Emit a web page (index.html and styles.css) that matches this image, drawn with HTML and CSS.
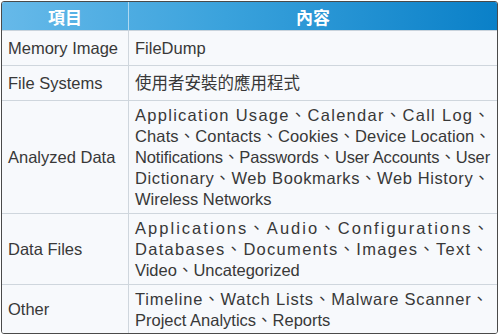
FILE: index.html
```html
<!DOCTYPE html>
<html lang="zh-Hant">
<head>
<meta charset="utf-8">
<title>項目 內容</title>
<link rel="stylesheet" href="styles.css">
</head>
<body>
<div class="frame">
  <table class="spec">
    <thead>
      <tr>
        <th class="col-key">項目</th>
        <th class="col-val">內容</th>
      </tr>
    </thead>
    <tbody>
      <tr class="single">
        <td class="key">Memory Image</td>
        <td class="val">FileDump</td>
      </tr>
      <tr class="single">
        <td class="key">File Systems</td>
        <td class="val">使用者安裝的應用程式</td>
      </tr>
      <tr>
        <td class="key">Analyzed Data</td>
        <td class="val">
          <span class="line ls-usage">Application Usage、Calendar、Call Log、</span>
          <span class="line ls-chats">Chats、Contacts、Cookies、Device Location、</span>
          <span class="line ls-notif">Notifications、Passwords、User Accounts、User</span>
          <span class="line ls-dict">Dictionary、Web Bookmarks、Web History、</span>
          <span class="line">Wireless Networks</span>
        </td>
      </tr>
      <tr>
        <td class="key">Data Files</td>
        <td class="val">
          <span class="line ls-apps">Applications、Audio、Configurations、</span>
          <span class="line ls-db">Databases、Documents、Images、Text、</span>
          <span class="line">Video、Uncategorized</span>
        </td>
      </tr>
      <tr>
        <td class="key">Other</td>
        <td class="val">
          <span class="line ls-time">Timeline、Watch Lists、Malware Scanner、</span>
          <span class="line">Project Analytics、Reports</span>
        </td>
      </tr>
    </tbody>
  </table>
</div>
</body>
</html>
```

FILE: styles.css
```css
html, body {
  margin: 0;
  padding: 0;
  background: #ffffff;
}

body {
  padding: 1px 0 0 1px;
  font-family: "Liberation Sans", "Noto Sans CJK TC", sans-serif;
  color: #383838;
}

.frame {
  box-sizing: border-box;
  width: 497px;
  height: 333px;
  border: 1.5px solid #4a4a4a;
  border-radius: 3px;
  overflow: hidden;
  background: #f7f9fc;
}

.spec {
  width: 100%;
  border-collapse: collapse;
  table-layout: fixed;
}

.spec th {
  height: 28px;
  padding: 0;
  font-family: "Noto Sans CJK TC", sans-serif;
  font-weight: 700;
  font-size: 17px;
  color: #ffffff;
  text-align: center;
  vertical-align: middle;
  border-bottom: 1px solid #c9d3dc;
}

.spec thead tr {
  background: linear-gradient(to right, #66b9e9 0%, #3aa2dc 45%, #0a80c8 100%);
}

.col-key {
  width: 126px;
  border-right: 1px solid rgba(255, 255, 255, 0.55);
}

.spec td {
  padding: 3.5px 6px 3.5px 6px;
  font-size: 16.5px;
  line-height: 21px;
  vertical-align: middle;
  border-bottom: 1px solid #cfd6dd;
  background: #f7f9fc;
}

.spec tbody tr:last-child td {
  border-bottom: none;
}

.spec td.key {
  border-right: 1px solid #cfd6dd;
  white-space: nowrap;
}

.spec tr.single td {
  padding-top: 6.5px;
  padding-bottom: 6.5px;
}

.line {
  display: block;
  white-space: nowrap;
}

/* per-line tracking so each full line fills the cell width */
.ls-usage { letter-spacing: 1.28px; }
.ls-chats { letter-spacing: 0.12px; }
.ls-notif { letter-spacing: -0.15px; }
.ls-dict  { letter-spacing: 0.6px; }
.ls-apps  { letter-spacing: 2.03px; }
.ls-db    { letter-spacing: 1.3px; }
.ls-time  { letter-spacing: 0.8px; }
```
